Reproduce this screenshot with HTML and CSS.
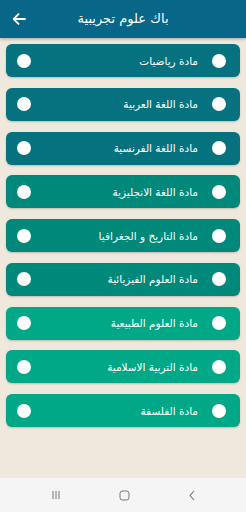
FILE: index.html
```html
<!DOCTYPE html>
<html lang="ar">
	<head>
		<meta charset="utf-8">
		<title>باك علوم تجريبية</title>
		<link rel="stylesheet" href="styles.css">
	</head>
	<body>
		<div class="screen">
			<div class="topbar">
				<span class="back">
					<svg width="14" height="12" viewBox="0 0 14 12"><path d="M13 6H2M6.5 1.2L1.7 6l4.8 4.8" fill="none" stroke="#fff" stroke-width="1.8" stroke-linecap="round" stroke-linejoin="round"/></svg>
				</span>
				<span class="title">باك علوم تجريبية</span>
			</div>
			<div class="list">
				<div class="item blue"><span class="dot"></span><span class="label">مادة رياضيات</span><span class="dot"></span></div>
				<div class="item blue"><span class="dot"></span><span class="label">مادة اللغة العربية</span><span class="dot"></span></div>
				<div class="item blue"><span class="dot"></span><span class="label">مادة اللغة الفرنسية</span><span class="dot"></span></div>
				<div class="item teal"><span class="dot"></span><span class="label">مادة اللغة الانجليزية</span><span class="dot"></span></div>
				<div class="item teal"><span class="dot"></span><span class="label">مادة التاريخ و الجغرافيا</span><span class="dot"></span></div>
				<div class="item teal"><span class="dot"></span><span class="label">مادة العلوم الفيزيائية</span><span class="dot"></span></div>
				<div class="item green"><span class="dot"></span><span class="label">مادة العلوم الطبيعية</span><span class="dot"></span></div>
				<div class="item green"><span class="dot"></span><span class="label">مادة التربية الاسلامية</span><span class="dot"></span></div>
				<div class="item green"><span class="dot"></span><span class="label">مادة الفلسفة</span><span class="dot"></span></div>
			</div>
			<div class="navbar">
				<svg width="10" height="10" viewBox="0 0 10 10"><path d="M2 1v8M5 1v8M8 1v8" stroke="#777" stroke-width="1"/></svg>
				<svg width="11" height="11" viewBox="0 0 11 11"><rect x="1" y="1" width="9" height="9" rx="2.5" fill="none" stroke="#777" stroke-width="1"/></svg>
				<svg width="8" height="11" viewBox="0 0 8 11"><path d="M6 1L2 5.5 6 10" fill="none" stroke="#777" stroke-width="1.1"/></svg>
			</div>
		</div>
	</body>
</html>
```
FILE: styles.css
```css
body{
	margin: 0;
	padding: 0;
	font-family: "DejaVu Sans", "Noto Sans", sans-serif;
	background: #efe8dc;
}
.screen{
	width: 246px;
	height: 512px;
	display: flex;
	flex-direction: column;
}
.topbar{
	height: 38px;
	flex: none;
	background-color: #086689;
	box-shadow: 0 1px 3px rgba(0,0,0,0.3);
	display: flex;
	align-items: center;
	position: relative;
	color: #fff;
}
.back{
	width: 38px;
	display: flex;
	justify-content: center;
	margin-top: -1px;
}
.title{
	flex: 1;
	text-align: center;
	font-size: 13px;
	margin-right: 38px;
	margin-top: -2px;
}
.list{
	flex: 1;
	padding: 6px 6px 0 6px;
	display: flex;
	flex-direction: column;
	gap: 10.75px;
}
.item{
	height: 33px;
	border-radius: 6px;
	display: flex;
	align-items: center;
	padding: 0 14px 0 11px;
	box-shadow: 0 1px 2px rgba(0,0,0,0.2);
	color: #fff;
}
.blue{
	background-color: #07727f;
}
.teal{
	background-color: #00897a;
}
.green{
	background-color: #00a887;
}
.dot{
	width: 14px;
	height: 14px;
	border-radius: 50%;
	background: #fff;
	flex: none;
}
.label{
	flex: 1;
	text-align: right;
	direction: rtl;
	font-size: 10.5px;
	padding-right: 14px;
}
.navbar{
	height: 34px;
	flex: none;
	background: #f5f5f5;
	display: flex;
	align-items: center;
	justify-content: space-between;
	padding: 0 50px 0 51px;
}
```
